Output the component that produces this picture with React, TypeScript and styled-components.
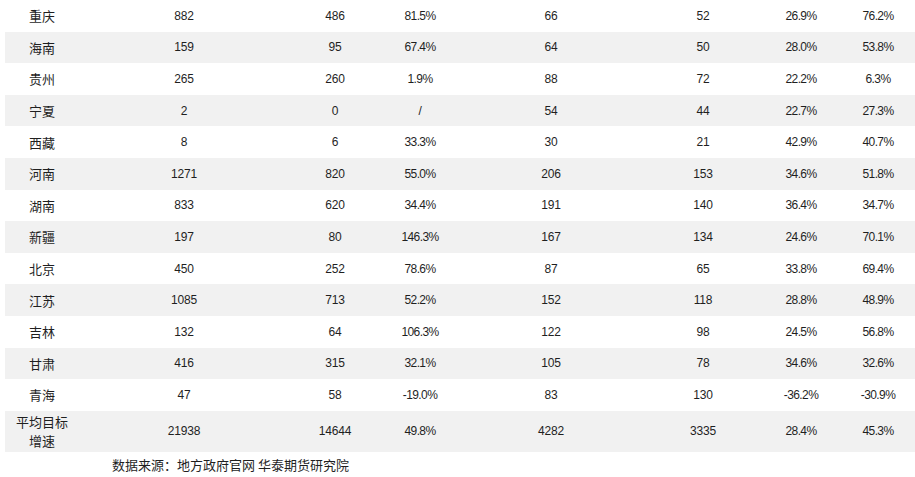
import React from 'react';
import styled, { createGlobalStyle } from 'styled-components';

const GlobalStyle = createGlobalStyle`
    html, body {
        margin: 0;
        padding: 0;
        background: #ffffff;
        overflow: hidden;
    }
    body {
        font-family: "Liberation Sans", Arial, "Noto Sans CJK SC", sans-serif;
        color: #1f1f1f;
    }
`;

const Page = styled.div`
    width: 915px;
    height: 477px;
    overflow: hidden;
`;

const Table = styled.div`
    margin-left: 5px;
    width: 912px;
    display: flex;
    flex-direction: column;
`;

const Row = styled.div<{ $shade?: boolean; $tall?: boolean }>`
    display: grid;
    grid-template-columns: 74px 210px 92px 78px 184px 120px 76px 78px;
    align-items: center;
    height: ${(p) => (p.$tall ? '41px' : '31.6px')};
    background: ${(p) => (p.$shade ? '#f1f1f1' : '#ffffff')};
`;

const Cell = styled.div<{ $pct?: boolean }>`
    text-align: center;
    font-size: 12px;
    line-height: 14px;
    letter-spacing: ${(p) => (p.$pct ? '-0.6px' : '-0.2px')};
`;

const NameCell = styled.div`
    text-align: center;
    font-family: "Noto Sans CJK SC", sans-serif;
    font-size: 13px;
    line-height: 19px;
`;

const Footer = styled.div`
    padding: 4px 0 0 112px;
    font-family: "Noto Sans CJK SC", sans-serif;
    font-size: 13px;
    line-height: 18px;
    color: #1f1f1f;
`;

const rows: string[][] = [
    ['重庆', '882', '486', '81.5%', '66', '52', '26.9%', '76.2%'],
    ['海南', '159', '95', '67.4%', '64', '50', '28.0%', '53.8%'],
    ['贵州', '265', '260', '1.9%', '88', '72', '22.2%', '6.3%'],
    ['宁夏', '2', '0', '/', '54', '44', '22.7%', '27.3%'],
    ['西藏', '8', '6', '33.3%', '30', '21', '42.9%', '40.7%'],
    ['河南', '1271', '820', '55.0%', '206', '153', '34.6%', '51.8%'],
    ['湖南', '833', '620', '34.4%', '191', '140', '36.4%', '34.7%'],
    ['新疆', '197', '80', '146.3%', '167', '134', '24.6%', '70.1%'],
    ['北京', '450', '252', '78.6%', '87', '65', '33.8%', '69.4%'],
    ['江苏', '1085', '713', '52.2%', '152', '118', '28.8%', '48.9%'],
    ['吉林', '132', '64', '106.3%', '122', '98', '24.5%', '56.8%'],
    ['甘肃', '416', '315', '32.1%', '105', '78', '34.6%', '32.6%'],
    ['青海', '47', '58', '-19.0%', '83', '130', '-36.2%', '-30.9%'],
];

const total = ['21938', '14644', '49.8%', '4282', '3335', '28.4%', '45.3%'];

const App: React.FC = () => {
    return (
        <Page>
            <GlobalStyle />
            <Table>
                {rows.map((r, i) => (
                    <Row key={r[0]} $shade={i % 2 === 1}>
                        <NameCell>{r[0]}</NameCell>
                        {r.slice(1).map((v, j) => (
                            <Cell key={j} $pct={v.endsWith('%')}>{v}</Cell>
                        ))}
                    </Row>
                ))}
                <Row $shade $tall>
                    <NameCell>
                        平均目标
                        <br />
                        增速
                    </NameCell>
                    {total.map((v, j) => (
                        <Cell key={j} $pct={v.endsWith('%')}>{v}</Cell>
                    ))}
                </Row>
            </Table>
            <Footer>数据来源：地方政府官网 华泰期货研究院</Footer>
        </Page>
    );
};

export default App;
